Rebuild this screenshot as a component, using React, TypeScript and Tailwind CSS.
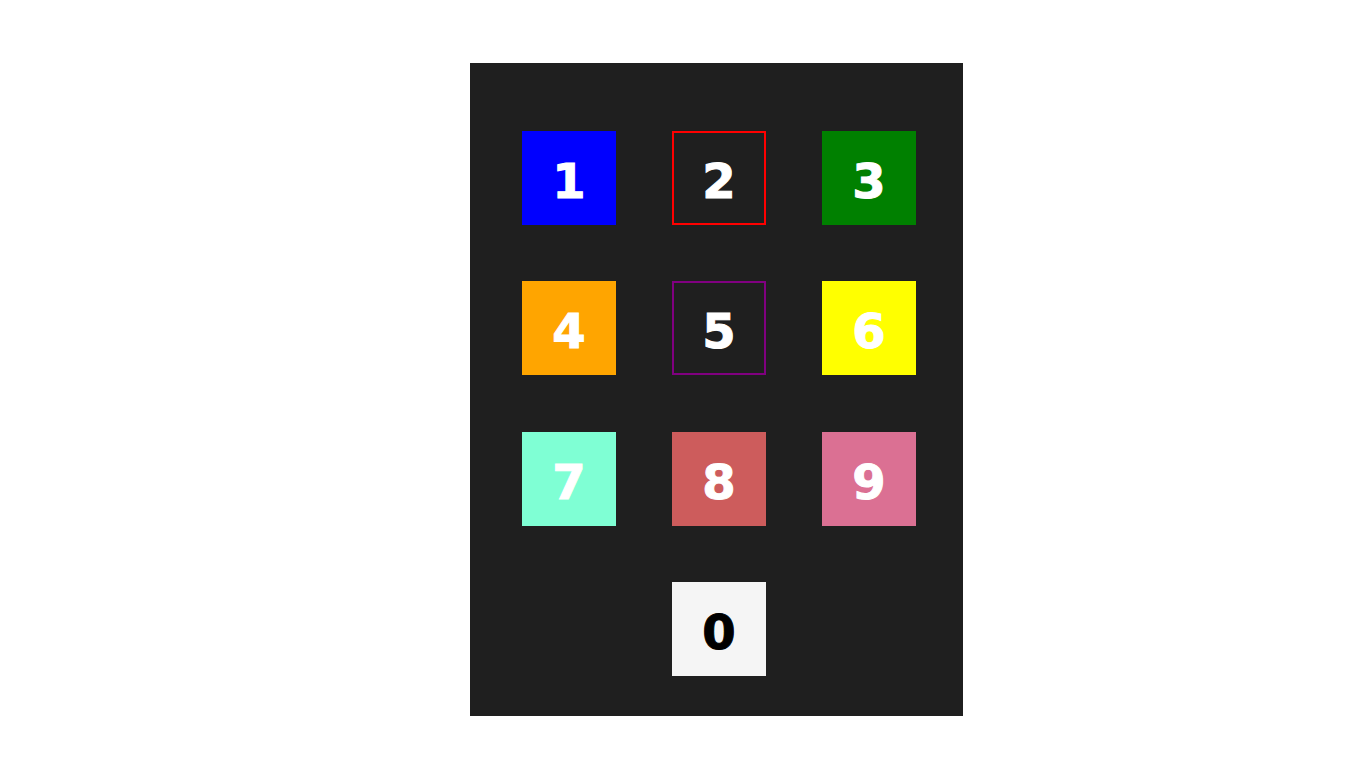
const tiles = [
    { label: '1', className: 'bg-[#0000ff] text-white' },
    { label: '2', className: 'border-2 border-[#ff0000] text-white' },
    { label: '3', className: 'bg-[#008000] text-white' },
    { label: '4', className: 'bg-[#ffa500] text-white' },
    { label: '5', className: 'border-2 border-[#800080] text-white' },
    { label: '6', className: 'bg-[#ffff00] text-white' },
    { label: '7', className: 'bg-[#7fffd4] text-white' },
    { label: '8', className: 'bg-[#cd5c5c] text-white' },
    { label: '9', className: 'bg-[#db7093] text-white' },
];

const Tile = ({ label, className }: { label: string; className: string }) => (
    <div className={`w-[94px] h-[94px] flex items-center justify-center pt-[6px] text-[48px] font-bold [-webkit-text-stroke:1px_currentColor] ${className}`}>
        {label}
    </div>
);

export default function App() {
    return (
        <div className="min-h-screen bg-white pt-[63px] pl-[470px]" style={{ fontFamily: '"DejaVu Sans", sans-serif' }}>
            <div className="w-[493px] h-[653px] bg-[#1f1f1f] pt-[68px] pl-[52px]">
                <div className="grid grid-cols-[94px_94px_94px] gap-x-[56px] gap-y-[56.3px]">
                    {tiles.map(t => (
                        <Tile key={t.label} label={t.label} className={t.className}/>
                    ))}
                    <div/>
                    <Tile label="0" className="bg-[#f5f5f5] text-black"/>
                    <div/>
                </div>
            </div>
        </div>
    );
}
